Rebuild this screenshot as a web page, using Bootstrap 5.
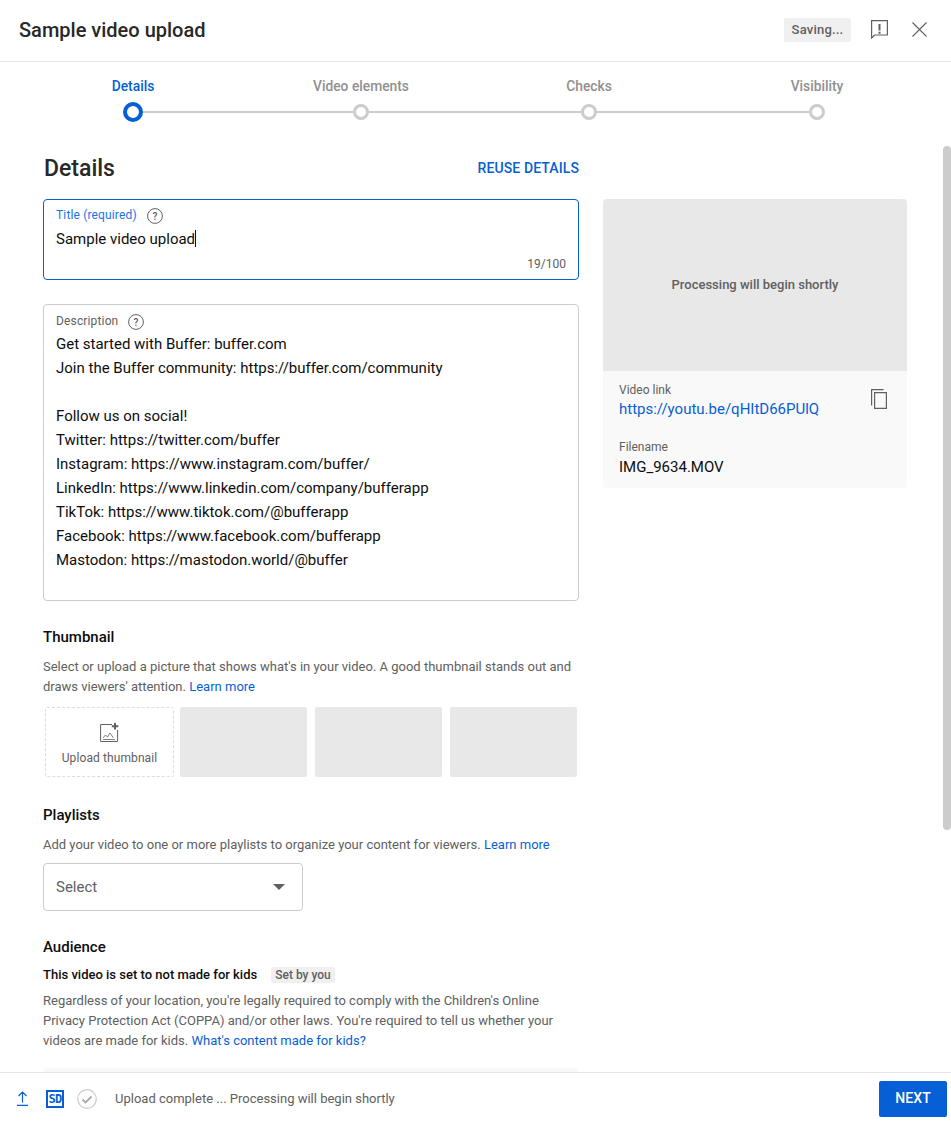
<!DOCTYPE html>
<html lang="en">
<head>
<meta charset="utf-8">
<title>Sample video upload</title>
<link href="https://cdn.jsdelivr.net/npm/bootstrap@5.3.0/dist/css/bootstrap.min.css" rel="stylesheet">
<style>
html,body{height:100%;overflow:hidden}
body{font-family:Roboto,"Liberation Sans",sans-serif;color:#0d0d0d;background:#fff;font-size:15px}
.shell{height:1124px;position:relative}
.top-bar{height:62px;border-bottom:1px solid #e5e5e5;padding:0 24px 2px 19px}
.top-title{font-size:20px;font-weight:500;margin:0;color:#282828}
.saving{background:#f0f0f0;color:#606060;font-size:13px;font-weight:500;height:24px;width:67px;border-radius:2px;letter-spacing:.2px;margin-right:20px}
.fb-ico{margin-right:24px}
.stepper{height:86px;padding-top:15px}
.step-names{display:grid;grid-template-columns:repeat(4,228px);margin-left:19px}
.step-names span{text-align:center;font-size:13.8px;font-weight:500;color:#909090;line-height:18px}
.step-names .now{color:#065fd4}
.step-track{margin:7px 0 0 123px;width:702px}
.dot{width:16px;height:16px;border:3px solid #ccc;border-radius:50%;flex:none;background:#fff}
.dot.now{width:20px;height:20px;border:4px solid #065fd4}
.link-line{height:2px;background:#ccc;flex:1}
.link-line.short{flex:none;width:210px}
.form-zone{height:924px;padding:0 44px 0 43px;overflow:hidden}
.form-left{width:536px;flex:none}
.form-right{width:304px;flex:none;margin-top:51px}
.sec-head{height:51px;padding-bottom:10px}
.sec-head h2{font-size:23px;font-weight:500;margin:0 0 0 1px;color:#282828}
.reuse{color:#065fd4;font-size:14px;font-weight:500;letter-spacing:.1px;text-decoration:none}
.field{border:1px solid #ccc;border-radius:4px;padding:8px 12px;position:relative}
.field.focus{border-color:#065fd4;height:81px;padding-top:5px;margin-bottom:24px}
.field.desc{height:297px;padding-top:6px;margin-bottom:26px}
.field-label{font-size:12px;color:#606060;line-height:21px;display:flex;align-items:center;gap:10px;letter-spacing:.15px}
.help{width:16px;height:16px;flex:none}
.focus .field-label{color:#1a73e8}
.typed{font-size:15px;line-height:24px;color:#0d0d0d}
.focus .typed{margin-top:1px}
.caret{display:inline-block;width:1px;height:17px;background:#0d0d0d;vertical-align:-3px}
.count{position:absolute;right:12px;bottom:7px;font-size:12px;color:#606060;line-height:16px}
.desc-text{white-space:pre-line}
.blk-title{font-size:15px;font-weight:500;line-height:20px;margin:0 0 10px;color:#0d0d0d}
.blk-title.tight{margin-bottom:8px}
.blk-text{font-size:13px;line-height:20px;color:#606060;margin:0}
.blk-text a{color:#065fd4;text-decoration:none}
.thumbs{display:flex;margin:10px 0 28px 2px}
.thumb-up{width:129px;flex:none;height:70px;border:1px dashed #ddd;border-radius:2px;color:#606060;font-size:12px;letter-spacing:.1px;padding-top:5px;margin-right:6px}
.thumb-up svg{margin-bottom:7px}
.thumb-blank{width:127px;flex:none;height:70px;background:#e8e8e8;border-radius:2px;margin-right:8px}
.thumb-blank:last-child{margin-right:0}
.picker{width:260px;height:48px;border:1px solid #ccc;border-radius:4px;margin:8px 0 26px;padding:0 17px 0 12px;color:#606060;font-size:15px}
.caret-down{width:0;height:0;border-left:6.5px solid transparent;border-right:6.5px solid transparent;border-top:6.5px solid #606060}
.kids{font-size:13px;font-weight:500;line-height:20px;color:#0d0d0d;margin-bottom:6px}
.tag{background:#f0f0f0;color:#606060;font-size:12px;line-height:16px;padding:0 4px;border-radius:2px;margin-left:14px}
.next-box{height:60px;background:#f9f9f9;border-radius:4px;margin-top:17px}
.preview{height:172px;background:#e8e8e8;border-radius:4px 4px 0 0;color:#606060;font-size:13px;font-weight:500}
.meta{background:#f9f9f9;border-radius:0 0 4px 4px;height:117px;padding:11px 16px;position:relative}
.meta-label{font-size:12px;line-height:16px;color:#606060}
.meta-label.later{margin-top:20px}
.meta-val{font-size:15px;line-height:20px;margin-top:1px;color:#0d0d0d}
.meta-val.later{margin-top:2px}
.meta-val a{color:#065fd4;text-decoration:none}
.copy-ico{position:absolute;left:268px;top:18px;width:16px;height:20px}
.foot-bar{position:absolute;left:0;right:0;top:1072px;height:52px;background:#fff;border-top:1px solid #e5e5e5;padding:0 4px 0 17px}
.foot-status{font-size:13px;color:#606060;margin-left:18px}
.btn.next-btn{background:#065fd4;color:#fff;border:0;border-radius:2px;width:68px;height:36px;padding:0;font-size:14px;font-weight:500;letter-spacing:.1px}
.scroll-thumb{position:absolute;right:0;top:146px;width:8px;height:684px;background:#ccc;border-radius:4px}
.sd-box{border:2px solid #065fd4;width:18px;height:18px;color:#065fd4;font:700 12px/14px "DejaVu Sans Mono",monospace;text-align:center;letter-spacing:-.8px;margin-left:18px}
.ok-ico{margin-left:13px}
</style>
</head>
<body>
<div class="shell">
  <header class="top-bar d-flex align-items-center">
    <h1 class="top-title flex-grow-1">Sample video upload</h1>
    <span class="saving d-flex align-items-center justify-content-center">Saving...</span>
    <svg class="fb-ico" width="17" height="19" viewBox="0 0 17 19" fill="none" stroke="#606060" stroke-width="1.2"><path d="M.6 18V.6h15.8v14.4H3.6z"/><path d="M8.5 4v6.5M8.5 11.8v2" stroke-width="2"/></svg>
    <svg width="15" height="15" viewBox="0 0 15 15" stroke="#606060" stroke-width="1.1"><path d="M.5.5l14 14M14.5.5l-14 14"/></svg>
  </header>

  <nav class="stepper">
    <div class="step-names"><span class="now">Details</span><span>Video elements</span><span>Checks</span><span>Visibility</span></div>
    <div class="step-track d-flex align-items-center">
      <div class="dot now"></div><div class="link-line short"></div>
      <div class="dot"></div><div class="link-line"></div>
      <div class="dot"></div><div class="link-line"></div>
      <div class="dot"></div>
    </div>
  </nav>

  <main class="form-zone d-flex gap-4">
    <div class="form-left">
      <div class="sec-head d-flex align-items-center justify-content-between">
        <h2>Details</h2>
        <a class="reuse" href="#">REUSE DETAILS</a>
      </div>
      <div class="field focus">
        <div class="field-label">Title (required)
          <svg class="help" viewBox="0 0 16 16" fill="none" stroke="#606060"><circle cx="8" cy="8" r="7.4"/><text x="8" y="11.6" text-anchor="middle" font-size="10" font-weight="500" fill="#606060" stroke="none" font-family="Roboto">?</text></svg>
        </div>
        <div class="typed">Sample video upload<span class="caret"></span></div>
        <div class="count">19/100</div>
      </div>
      <div class="field desc">
        <div class="field-label">Description
          <svg class="help" viewBox="0 0 16 16" fill="none" stroke="#606060"><circle cx="8" cy="8" r="7.4"/><text x="8" y="11.6" text-anchor="middle" font-size="10" font-weight="500" fill="#606060" stroke="none" font-family="Roboto">?</text></svg>
        </div>
        <div class="typed desc-text">Get started with Buffer: buffer.com
Join the Buffer community: https://buffer.com/community

Follow us on social!
Twitter: https://twitter.com/buffer
Instagram: https://www.instagram.com/buffer/
LinkedIn: https://www.linkedin.com/company/bufferapp
TikTok: https://www.tiktok.com/@bufferapp
Facebook: https://www.facebook.com/bufferapp
Mastodon: https://mastodon.world/@buffer</div>
      </div>

      <h3 class="blk-title">Thumbnail</h3>
      <p class="blk-text">Select or upload a picture that shows what's in your video. A good thumbnail stands out and draws viewers' attention. <a href="#">Learn more</a></p>
      <div class="thumbs">
        <div class="thumb-up d-flex flex-column align-items-center justify-content-center">
          <svg width="19" height="19" viewBox="0 0 19 19" fill="none" stroke="#606060"><path d="M12 1.5H.6v17h17V7"/><path d="M3 15l2.5-3 2 2 2.5-4 3.5 5M3 16.5h12" stroke-width=".8"/><path d="M15 0v6.5M11.8 3.2h6.5" stroke-width="2"/></svg>
          <span>Upload thumbnail</span>
        </div>
        <div class="thumb-blank"></div><div class="thumb-blank"></div><div class="thumb-blank"></div>
      </div>

      <h3 class="blk-title">Playlists</h3>
      <p class="blk-text">Add your video to one or more playlists to organize your content for viewers. <a href="#">Learn more</a></p>
      <div class="picker d-flex align-items-center justify-content-between"><span>Select</span><span class="caret-down"></span></div>

      <h3 class="blk-title tight">Audience</h3>
      <div class="kids d-flex align-items-center">This video is set to not made for kids<span class="tag">Set by you</span></div>
      <p class="blk-text">Regardless of your location, you're legally required to comply with the Children's Online Privacy Protection Act (COPPA) and/or other laws. You're required to tell us whether your videos are made for kids. <a href="#">What's content made for kids?</a></p>
      <div class="next-box"></div>
    </div>
    <aside class="form-right">
      <div class="preview d-flex align-items-center justify-content-center">Processing will begin shortly</div>
      <div class="meta">
        <div class="meta-label">Video link</div>
        <div class="meta-val"><a href="#">https://youtu.be/qHItD66PUlQ</a></div>
        <div class="meta-label later">Filename</div>
        <div class="meta-val later">IMG_9634.MOV</div>
        <svg class="copy-ico" viewBox="0 0 16 20" fill="none" stroke="#606060" stroke-width="1.2"><path d="M.6 16.5V.6h12"/><path d="M3.6 3.6h11.8v15.8H3.6z"/></svg>
      </div>
    </aside>
  </main>

  <div class="scroll-thumb"></div>

  <footer class="foot-bar d-flex align-items-center">
    <svg width="11" height="15" viewBox="0 0 11 15" fill="none" stroke="#065fd4" stroke-width="1.2"><path d="M5.5 11.5V1M1.5 5l4-4 4 4M0 14.4h11"/></svg>
    <div class="sd-box">SD</div>
    <svg class="ok-ico" width="20" height="20" viewBox="0 0 20 20" fill="none"><circle cx="10" cy="10" r="9.3" stroke="#ccc" stroke-width="1.2"/><path d="M5.5 10.5l3 3 6-6" stroke="#aaa" stroke-width="1.8"/></svg>
    <span class="foot-status flex-grow-1">Upload complete ... Processing will begin shortly</span>
    <button class="btn next-btn" type="button">NEXT</button>
  </footer>
</div>
<script src="https://cdn.jsdelivr.net/npm/bootstrap@5.3.0/dist/js/bootstrap.bundle.min.js"></script>
</body>
</html>
